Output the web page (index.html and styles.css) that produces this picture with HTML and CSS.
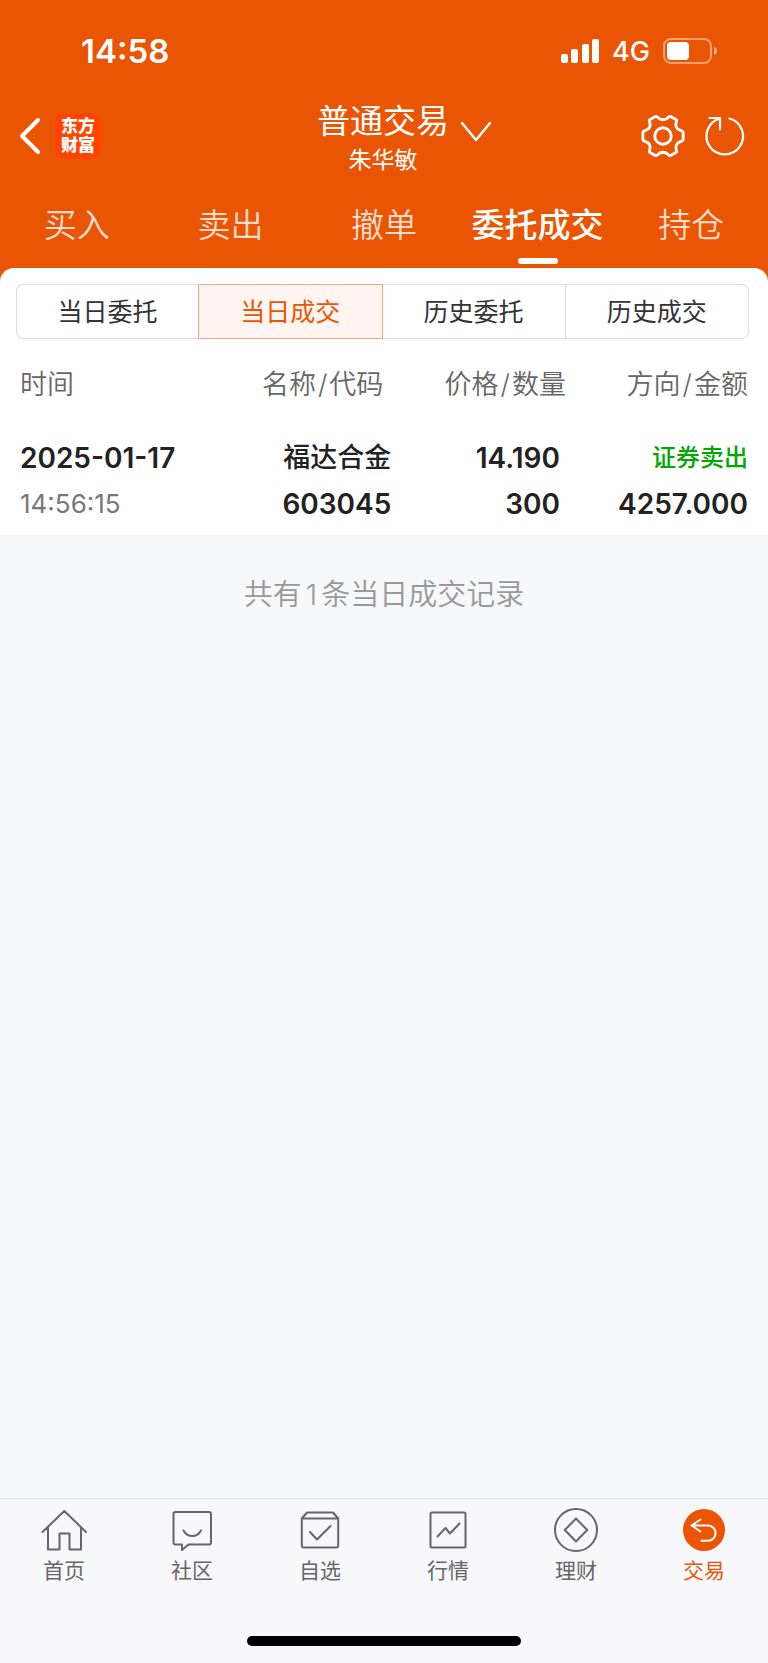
FILE: index.html
```html
<!DOCTYPE html>
<html lang="zh-CN">
<head>
<meta charset="utf-8">
<meta name="viewport" content="width=device-width, initial-scale=1">
<title>普通交易</title>
<link rel="stylesheet" href="styles.css">
</head>
<body class="app">
<header class="header">
  <div class="status">
    <span class="status-time">14:58</span>
    <div class="status-right">
      <svg width="40" height="26" viewBox="0 0 40 26" fill="#fff" aria-hidden="true"><rect x="1" y="16" width="7" height="9" rx="2"/><rect x="11" y="11" width="7" height="14" rx="2"/><rect x="22" y="6" width="7" height="19" rx="2"/><rect x="32" y="1" width="7" height="24" rx="2"/></svg>
      <span class="status-net">4G</span>
      <svg width="56" height="28" viewBox="0 0 56 28" aria-hidden="true"><rect x="2" y="2" width="47" height="24" rx="7" fill="none" stroke="#fff" stroke-opacity=".45" stroke-width="2"/><rect x="5" y="5" width="22" height="18" rx="4" fill="#fff"/><path d="M52 10q3 1 3 4t-3 4z" fill="#fff" fill-opacity=".5"/></svg>
    </div>
  </div>
  <div class="topbar">
    <div class="topbar-left">
      <button class="icon-btn" aria-label="返回"><svg width="24" height="40" viewBox="0 0 24 40" fill="none" stroke="#fff" stroke-width="4" stroke-linecap="round" stroke-linejoin="round"><path d="M19 4L3 20l16 16"/></svg></button>
      <a class="logo" href="#"><span>东方</span><span>财富</span></a>
    </div>
    <div class="account">
      <button class="account-btn"><span class="account-title">普通交易</span><svg class="account-arrow" width="32" height="24" viewBox="0 0 32 24" fill="none" stroke="#fff" stroke-width="2.4" stroke-linecap="round" stroke-linejoin="round"><path d="M2 3l14 17L30 3"/></svg></button>
      <span class="account-name">朱华敏</span>
    </div>
    <div class="topbar-right">
      <button class="icon-btn" aria-label="设置"><svg width="48" height="48" viewBox="-1 -1 50 50" fill="none" stroke="#fff" stroke-width="3" stroke-linejoin="round"><path d="M45 20.500V27.500Q44.500 29.500 42 30C38 31 36.500 35 37.900 38.600Q38.800 40.500 37.500 41.200L32 44.200Q30.300 44.800 29 43C26.500 40.200 21.500 40.200 19 43Q17.700 44.800 16 44.200L10.500 41.200Q9.200 40.500 10.100 38.600C11.500 35 10 31 6 30Q3.500 29.500 3 27.500V20.500Q3.500 18.500 6 18C10 17 11.500 13 10.100 9.400Q9.200 7.500 10.500 6.800L16 3.800Q17.700 3.200 19 5C21.500 7.800 26.500 7.800 29 5Q30.300 3.200 32 3.800L37.500 6.800Q38.800 7.500 37.900 9.400C36.500 13 38 17 42 18Q44.500 18.500 45 20.500Z"/><circle cx="24" cy="24" r="8.600"/></svg></button>
      <button class="icon-btn" aria-label="刷新"><svg width="44" height="44" viewBox="0 0 44 44" fill="none" stroke="#fff" stroke-width="2.2" stroke-linecap="round" stroke-linejoin="round"><path d="M26.500 4.500A18.300 18.300 0 1 1 17 4.500"/><path d="M6.500 4H17v11.500"/></svg></button>
    </div>
  </div>
  <nav class="tabs">
    <a class="tab" href="#">买入</a>
    <a class="tab" href="#">卖出</a>
    <a class="tab" href="#">撤单</a>
    <a class="tab tab-active" href="#">委托成交</a>
    <a class="tab" href="#">持仓</a>
  </nav>
</header>
<main class="main">
  <section class="panel">
    <div class="segments">
      <button class="segment">当日委托</button>
      <button class="segment segment-active">当日成交</button>
      <button class="segment">历史委托</button>
      <button class="segment">历史成交</button>
    </div>
    <table class="deals">
      <thead>
        <tr><th class="col-time">时间</th><th class="col-name">名称<span class="slash">/</span>代码</th><th class="col-price">价格<span class="slash">/</span>数量</th><th class="col-side">方向<span class="slash">/</span>金额</th></tr>
      </thead>
      <tbody>
        <tr>
          <td class="col-time"><span class="line">2025-01-17</span><span class="line line-time">14:56:15</span></td>
          <td class="col-name"><span class="line line-stock">福达合金</span><span class="line">603045</span></td>
          <td class="col-price"><span class="line">14.190</span><span class="line">300</span></td>
          <td class="col-side"><span class="line line-sell">证券卖出</span><span class="line">4257.000</span></td>
        </tr>
      </tbody>
    </table>
  </section>
  <p class="summary">共有<span class="count">1</span>条当日成交记录</p>
</main>
<footer class="footer">
  <nav class="nav">
    <a class="nav-item" href="#"><svg class="nav-icon" viewBox="0 0 48 48"><path d="M2.500 27L24.300 6 46 27M8 22.500v22h11.500v-16h10v16H41v-22"/></svg>首页</a>
    <a class="nav-item" href="#"><svg class="nav-icon" viewBox="0 0 48 48"><path d="M7.500 7h33.500a2 2 0 0 1 2 2v28.500a2 2 0 0 1-2 2H20.500L14 45v-5.500H7.500a2 2 0 0 1-2-2V9a2 2 0 0 1 2-2zM15.500 25.500Q18.500 31 24.300 31T33 25.500"/></svg>社区</a>
    <a class="nav-item" href="#"><svg class="nav-icon" viewBox="0 0 48 48"><path d="M5.800 13.500L11 7.500h26l5.200 6zM5.800 13.500v27a2 2 0 0 0 2 2h32.400a2 2 0 0 0 2-2v-27M14 27l7 7.500L34.500 21"/></svg>自选</a>
    <a class="nav-item" href="#"><svg class="nav-icon" viewBox="0 0 48 48"><rect x="6.500" y="7.500" width="35" height="35" rx="1.500"/><path d="M13.500 31.500l8-8.500 4.500 5.500 9.500-10"/></svg>行情</a>
    <a class="nav-item" href="#"><svg class="nav-icon" viewBox="0 0 48 48"><circle cx="24" cy="25" r="21"/><path d="M24 13.500L35.200 25 24 36.500 12.800 25z"/></svg>理财</a>
    <a class="nav-item nav-item-active" href="#"><svg class="nav-icon" viewBox="0 0 48 48"><circle cx="24" cy="25" r="21" fill="#ea5504" stroke="none"/><path stroke="#fff" d="M20.500 14.500L11.500 20.500l9 6M11.500 20.500H28a7.600 7.600 0 0 1 0 15.200h-6.500"/></svg>交易</a>
  </nav>
  <div class="home-bar"></div>
</footer>
</body>
</html>
```
FILE: styles.css
```css
* {
  box-sizing: border-box;
}

.app {
  margin: 0;
  min-height: 100vh;
  display: flex;
  flex-direction: column;
  background: #f7f8fa;
  color: #222;
  font-family: Inter, "Noto Sans CJK SC", sans-serif;
}

button {
  margin: 0;
  padding: 0;
  border: 0;
  background: none;
  color: inherit;
  font: inherit;
}

a {
  color: inherit;
  text-decoration: none;
}

svg {
  display: block;
}

.header {
  background: #ea5504;
  color: #fff;
  padding-bottom: 16px;
}

.status {
  height: 98px;
  padding: 4px 50px 0 81px;
  display: flex;
  align-items: center;
  justify-content: space-between;
}

.status-time {
  font-size: 33px;
  font-weight: 600;
}

.status-right {
  display: flex;
  align-items: center;
  gap: 12px;
}

.status-net {
  font-size: 27px;
  font-weight: 500;
}

.topbar {
  height: 78px;
  padding: 0 21px 0 19px;
  display: grid;
  grid-template-columns: 1fr auto 1fr;
  align-items: center;
}

.topbar-left {
  display: flex;
  align-items: center;
  gap: 12px;
  padding-bottom: 2px;
}

.topbar-right {
  display: flex;
  align-items: center;
  justify-content: flex-end;
  gap: 16px;
  padding-bottom: 2px;
}

.logo {
  width: 46px;
  height: 46px;
  border-radius: 9px;
  background: #ff4400;
  display: flex;
  flex-direction: column;
  align-items: center;
  justify-content: center;
  font-size: 17px;
  line-height: 19px;
  font-weight: 900;
}

.account {
  display: flex;
  flex-direction: column;
  align-items: center;
}

.account-btn {
  display: grid;
  grid-template-columns: 44px auto 44px;
  align-items: center;
}

.account-title {
  grid-column: 2;
  font-size: 33px;
  line-height: 46px;
}

.account-arrow {
  margin: 21px 0 0 11px;
}

.account-name {
  font-size: 23px;
  line-height: 32px;
}

.tabs {
  height: 92px;
  display: grid;
  grid-template-columns: repeat(5, 1fr);
  padding-top: 25px;
  font-size: 33px;
  line-height: 48px;
}

.tab {
  display: flex;
  flex-direction: column;
  align-items: center;
  gap: 9px;
  font-weight: 350;
  color: #ffdccb;
}

.tab-active {
  font-weight: 500;
  color: #fff;
}

.tab-active::after {
  content: "";
  width: 40px;
  height: 6px;
  border-radius: 3px;
  background: #fff;
}

.main {
  flex: 1;
  margin-top: -16px;
}

.panel {
  background: #fff;
  border-radius: 14px 14px 0 0;
  padding: 16px 16px 0;
}

.segments {
  display: grid;
  grid-template-columns: repeat(4, 1fr);
  height: 55px;
  margin-right: 3px;
}

.segment {
  border: 1px solid #dcdde2;
  border-left-width: 0;
  padding-bottom: 3px;
  font-size: 25px;
  color: #333;
}

.segment:first-child {
  border-left-width: 1px;
  border-right-color: #f0a788;
  border-radius: 7px 0 0 7px;
}

.segment:last-child {
  border-radius: 0 7px 7px 0;
}

.segment-active {
  border-color: #f0a788;
  background: #fff4f0;
  color: #ea5504;
}

.deals {
  width: 100%;
  table-layout: fixed;
  border-collapse: collapse;
}

.deals th,
.deals td {
  padding: 0;
  text-align: right;
}

.deals th {
  font-size: 27px;
  line-height: 92px;
  font-weight: 350;
  color: #666;
}

.slash {
  margin: 0 2px;
}

.deals td {
  padding: 4px 0 8px;
}

.deals .col-time {
  width: 27%;
  padding-left: 4px;
  text-align: left;
}

.deals .col-name {
  width: 24%;
}

.deals th.col-name {
  padding-right: 8px;
}

.deals .col-price {
  width: 24%;
}

.deals th.col-price {
  padding-right: 2px;
}

.deals td.col-price {
  padding-right: 8px;
}

.deals .col-side {
  width: 25%;
  padding-right: 4px;
}

.line {
  display: block;
  font-size: 28px;
  line-height: 46px;
  font-weight: 600;
}

.line.line-stock {
  font-size: 27px;
  font-weight: 500;
}

.line.line-time {
  font-size: 26px;
  font-weight: 400;
  color: #777;
}

.line.line-sell {
  font-size: 24px;
  font-weight: 500;
  color: #00a800;
}

.summary {
  margin: 40px 0 0;
  text-align: center;
  font-size: 29px;
  line-height: 40px;
  font-weight: 350;
  color: #999;
}

.count {
  margin: 0 4px;
}

.footer {
  border-top: 1px solid #e2e2e5;
  background: #f8f8fb;
  padding: 6px 0 17px;
}

.nav {
  display: grid;
  grid-template-columns: repeat(6, 1fr);
}

.nav-item {
  display: flex;
  flex-direction: column;
  align-items: center;
  gap: 4px;
  font-size: 21px;
  line-height: 28px;
  color: #666;
}

.nav-item-active {
  color: #ea5504;
}

.nav-icon {
  width: 48px;
  height: 48px;
  fill: none;
  stroke: currentColor;
  stroke-width: 2;
  stroke-linecap: round;
  stroke-linejoin: round;
}

.home-bar {
  width: 274px;
  height: 10px;
  margin: 51px auto 0;
  border-radius: 5px;
  background: #000;
}
```
